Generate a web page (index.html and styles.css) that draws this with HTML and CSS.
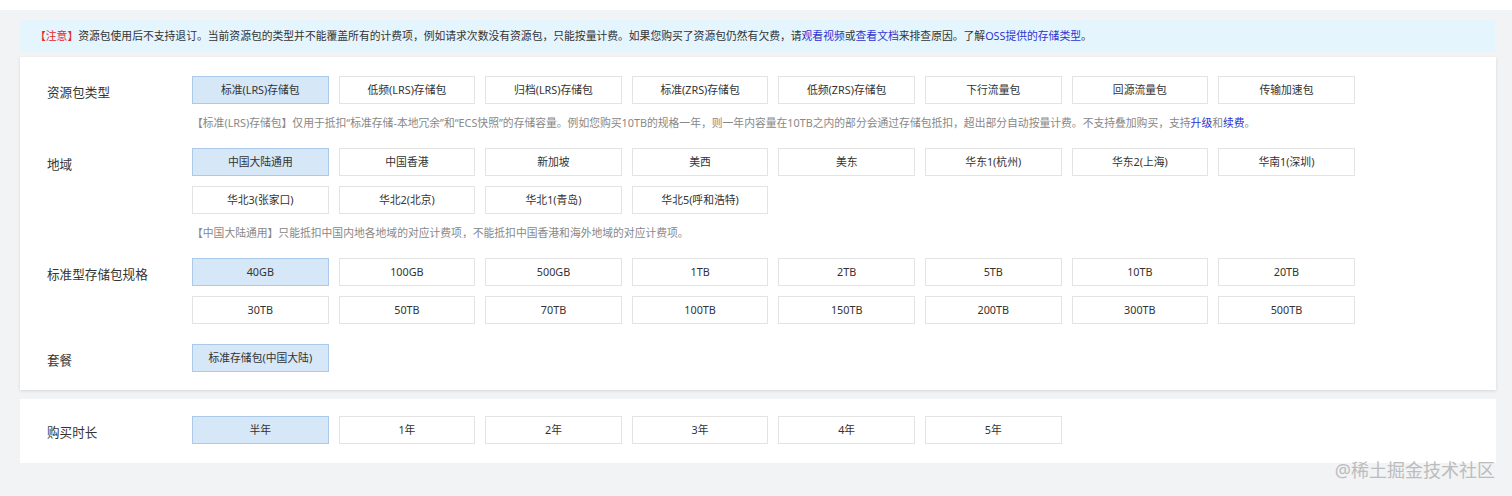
FILE: index.html
```html
<!DOCTYPE html>
<html lang="zh-CN">
<head>
    <meta charset="UTF-8">
    <meta name="viewport" content="width=device-width, initial-scale=1.0">
    <title>资源包购买</title>
    <link rel="stylesheet" href="styles.css">
</head>
<body>

<div class="page">
    <!-- notice bar -->
    <div class="notice">
        <span class="warn">【注意】</span>资源包使用后不支持退订。当前资源包的类型并不能覆盖所有的计费项，例如请求次数没有资源包，只能按量计费。如果您购买了资源包仍然有欠费，请<a href="#">观看视频</a>或<a href="#">查看文档</a>来排查原因。了解<a href="#">OSS提供的存储类型</a>。
    </div>

    <!-- main config panel -->
    <div class="panel panel-main">
        <div class="field">
            <div class="field-label">资源包类型</div>
            <div class="field-body">
                <div class="options">
                    <span class="option active">标准(LRS)存储包</span>
                    <span class="option">低频(LRS)存储包</span>
                    <span class="option">归档(LRS)存储包</span>
                    <span class="option">标准(ZRS)存储包</span>
                    <span class="option">低频(ZRS)存储包</span>
                    <span class="option">下行流量包</span>
                    <span class="option">回源流量包</span>
                    <span class="option">传输加速包</span>
                </div>
                <p class="field-tip">【标准(LRS)存储包】仅用于抵扣“标准存储-本地冗余”和“ECS快照”的存储容量。例如您购买10TB的规格一年，则一年内容量在10TB之内的部分会通过存储包抵扣，超出部分自动按量计费。不支持叠加购买，支持<a href="#">升级</a>和<a href="#">续费</a>。</p>
            </div>
        </div>

        <div class="field">
            <div class="field-label">地域</div>
            <div class="field-body">
                <div class="options">
                    <span class="option active">中国大陆通用</span>
                    <span class="option">中国香港</span>
                    <span class="option">新加坡</span>
                    <span class="option">美西</span>
                    <span class="option">美东</span>
                    <span class="option">华东1(杭州)</span>
                    <span class="option">华东2(上海)</span>
                    <span class="option">华南1(深圳)</span>
                    <span class="option">华北3(张家口)</span>
                    <span class="option">华北2(北京)</span>
                    <span class="option">华北1(青岛)</span>
                    <span class="option">华北5(呼和浩特)</span>
                </div>
                <p class="field-tip">【中国大陆通用】只能抵扣中国内地各地域的对应计费项，不能抵扣中国香港和海外地域的对应计费项。</p>
            </div>
        </div>

        <div class="field">
            <div class="field-label">标准型存储包规格</div>
            <div class="field-body">
                <div class="options">
                    <span class="option active">40GB</span>
                    <span class="option">100GB</span>
                    <span class="option">500GB</span>
                    <span class="option">1TB</span>
                    <span class="option">2TB</span>
                    <span class="option">5TB</span>
                    <span class="option">10TB</span>
                    <span class="option">20TB</span>
                    <span class="option">30TB</span>
                    <span class="option">50TB</span>
                    <span class="option">70TB</span>
                    <span class="option">100TB</span>
                    <span class="option">150TB</span>
                    <span class="option">200TB</span>
                    <span class="option">300TB</span>
                    <span class="option">500TB</span>
                </div>
            </div>
        </div>

        <div class="field">
            <div class="field-label">套餐</div>
            <div class="field-body">
                <div class="options">
                    <span class="option active">标准存储包(中国大陆)</span>
                </div>
            </div>
        </div>
    </div>

    <!-- duration panel -->
    <div class="panel panel-time">
        <div class="field">
            <div class="field-label">购买时长</div>
            <div class="field-body">
                <div class="options">
                    <span class="option active">半年</span>
                    <span class="option">1年</span>
                    <span class="option">2年</span>
                    <span class="option">3年</span>
                    <span class="option">4年</span>
                    <span class="option">5年</span>
                </div>
            </div>
        </div>
    </div>

    <div class="watermark">@稀土掘金技术社区</div>
</div>

</body>
</html>
```

FILE: styles.css
```css
body {
    margin: 0px;
    background-color: #fff;
    /* latin font first so quotes stay narrow */
    font-family: "Noto Sans", "Noto Sans CJK SC", sans-serif;
    color: #333;
}
.page {
    position: relative;
    margin-top: 10px;
    height: 486px;
    box-sizing: border-box;
    padding: 10px 16px 0 20px;
    background-color: #f2f3f5;
}
/* top notice */
.notice {
    height: 32px;
    line-height: 32px;
    margin-right: 1px;
    padding-left: 15px;
    background-color: #e5f5fd;
    font-size: 10.8px;
    color: #333;
    white-space: nowrap;
}
.notice .warn {
    color: #e4262b;
}
.notice a,
.field-tip a {
    color: #2d33d2;
    text-decoration: none;
}
.panel {
    background-color: #fff;
    padding: 19px 27px 8px;
}
.panel-main {
    margin-top: 5px;
    box-shadow: 0 1px 3px rgba(0, 0, 0, 0.12);
}
.panel-time {
    margin-top: 9px;
    padding: 17px 27px 9px;
}
.field {
    display: flex;
    margin-bottom: 10px;
}
.field:last-child {
    margin-bottom: 0;
}
.field-label {
    width: 145px;
    flex: none;
    padding-top: 3px;
    line-height: 28px;
    font-size: 12.6px;
    color: #333;
}
.field-body {
    flex-grow: 1;
}
.options {
    display: grid;
    grid-template-columns: repeat(8, 136.6px);
    gap: 10px;
    margin-bottom: 10px;
}
.option {
    height: 28px;
    box-sizing: border-box;
    border: 1px solid #e3e3e3;
    line-height: 26px;
    text-align: center;
    font-size: 10.8px;
    color: #333;
    cursor: pointer;
}
.option.active {
    background-color: #d6e7f8;
    border-color: #abc9e9;
}
.field-tip {
    margin: 0 0 6px;
    line-height: 18px;
    font-size: 10.8px;
    color: #888;
    white-space: nowrap;
}
.watermark {
    position: absolute;
    right: 17px;
    bottom: 14px;
    line-height: 24px;
    font-size: 18px;
    color: #bcbcbc;
}
```
